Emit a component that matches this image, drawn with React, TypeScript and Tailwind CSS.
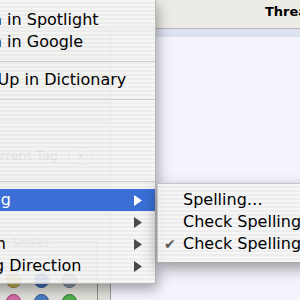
import React from 'react';

type RowProps = {
  label: string;
  arrow?: boolean;
  active?: boolean;
  disabled?: boolean;
  nudge?: boolean;
};

function Triangle({ active }: { active?: boolean }) {
  return (
    <svg width="8" height="11" viewBox="0 0 8 11" className="shrink-0">
      <polygon points="0,0 8,5.5 0,11" fill={active ? '#ffffff' : '#4a4a4a'} />
    </svg>
  );
}

function MenuRow({ label, arrow, active, disabled, nudge }: RowProps) {
  return (
    <div
      className={`flex items-center h-[22px] pr-[13px] ${
        active ? 'bg-[#3b6fd5] text-white' : disabled ? 'text-[#a0a0a0]' : 'text-black'
      }`}
    >
      <span className={`flex-1 whitespace-nowrap ${nudge ? 'pl-[27px]' : 'pl-[19px]'}`}>{label}</span>
      {arrow && <Triangle active={active} />}
    </div>
  );
}

function Separator() {
  return (
    <div className="h-[16px] flex items-center">
      <div className="h-px w-full bg-[#cfcfcf]" />
    </div>
  );
}

const stripes =
  'bg-[repeating-linear-gradient(180deg,rgba(246,246,246,0.88)_0px,rgba(246,246,246,0.88)_2px,rgba(236,236,236,0.88)_2px,rgba(236,236,236,0.88)_4px)]';

export default function App() {
  return (
    <div className="relative w-[300px] h-[300px] overflow-hidden font-['DejaVu_Sans',sans-serif] bg-[#f4f4fd]">
      {/* window behind the menu */}
      <div className="flex flex-col h-full">
        <div className="h-[29px] shrink-0 bg-[#ecebe5] border-b border-[#b4b4b4] flex items-start pt-[2px] pl-[265px]">
          <span className="text-[13px] font-bold text-black whitespace-nowrap">Threads</span>
        </div>
        <div className="flex flex-1 min-h-0">
          {/* sidebar */}
          <div className="w-[111px] shrink-0 bg-[#e2e1db] border-r border-[#9a9a9a] flex flex-col">
            <div className="h-[92px] shrink-0 border-b border-[#a8a8a8]" />
            <div className="h-[120px] shrink-0 pt-[25px]">
              <div className="flex items-center gap-[10px] ml-[-17px]">
                <span className="text-[13px] text-[#6a6a6a] whitespace-nowrap">Current Tag</span>
                <span className="w-[25px] h-[18px] rounded-full border border-[#8a8a8a] flex items-center justify-center text-[11px] text-[#6a6a6a]">
                  x
                </span>
              </div>
            </div>
            <div className="ml-[-10px] w-[108px] border-t border-r border-[#8c8c8c] flex-1 relative">
              <span className="absolute left-[22px] top-[-7px] text-[10px] text-[#6a6a6a] bg-[#e2e1db] px-[1px]">Smilies</span>
              <div className="grid grid-cols-3 w-fit gap-x-[13px] gap-y-[6px] pl-[16px] pt-[31px]">
                <div className="w-[15px] h-[15px] rounded-full bg-[#c9b44e] border border-[#8d7c2a]" />
                <div className="w-[15px] h-[15px] rounded-full bg-[#3f6db3] border border-[#284d8a]" />
                <div className="w-[15px] h-[15px] rounded-full bg-[#8a9aae] border border-[#5d6b7d]" />
                <div className="w-[15px] h-[15px] rounded-full bg-[#d269a6] border border-[#9c3f76]" />
                <div className="w-[15px] h-[15px] rounded-full bg-[#4b7cc4] border border-[#2d5597]" />
                <div className="w-[15px] h-[15px] rounded-full bg-[#4fae4a] border border-[#2f7a2c]" />
              </div>
            </div>
          </div>
          {/* thread list */}
          <div className="flex-1 flex flex-col">
            <div className="h-[8px] bg-[#dde2f0]" />
            <div className="flex-1 bg-[#f4f4fd]" />
          </div>
        </div>
      </div>

      {/* context menu */}
      <div
        className={`absolute left-[-72px] top-0 w-[228px] pt-[9px] pb-[6px] text-[16px] border-r border-b border-[#b9b9b9] shadow-[2px_5px_12px_rgba(0,0,0,0.35)] ${stripes}`}
      >
        <MenuRow label="Search in Spotlight" />
        <MenuRow label="Search in Google" />
        <Separator />
        <MenuRow label="Look Up in Dictionary" nudge />
        <Separator />
        <MenuRow label="Cut" disabled />
        <MenuRow label="Copy" disabled />
        <MenuRow label="Paste" disabled />
        <Separator />
        <MenuRow label="Spelling" arrow active />
        <MenuRow label="Font" arrow />
        <MenuRow label="Speech" arrow />
        <MenuRow label="Writing Direction" arrow />
      </div>

      {/* spelling submenu */}
      <div
        className={`absolute left-[157px] top-[183px] w-[220px] pt-[5px] pb-[7px] text-[16px] text-black border-t border-l border-[#c4c4c4] shadow-[0_6px_14px_rgba(0,0,0,0.4)] ${stripes}`}
      >
        <div className="flex items-center h-[22px]">
          <span className="w-[25px] shrink-0" />
          <span className="whitespace-nowrap">Spelling…</span>
        </div>
        <div className="flex items-center h-[22px]">
          <span className="w-[25px] shrink-0" />
          <span className="whitespace-nowrap">Check Spelling</span>
        </div>
        <div className="flex items-center h-[22px]">
          <span className="w-[25px] shrink-0 pl-[6px] text-[14px] text-[#5a5a5a]">✔</span>
          <span className="whitespace-nowrap">Check Spelling As You Type</span>
        </div>
      </div>
    </div>
  );
}
